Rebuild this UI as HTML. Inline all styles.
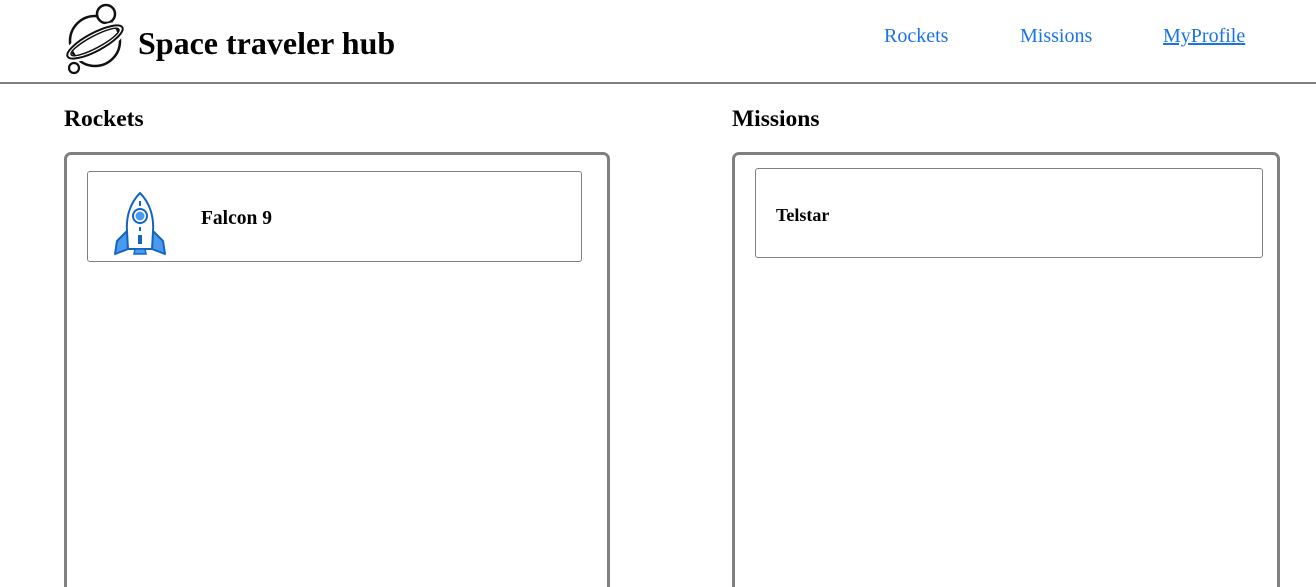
<!DOCTYPE html>
<html style="overflow:hidden"><head><style>
body{margin:0;background:#fff;font-family:"Liberation Serif",serif;width:1316px;height:587px;overflow:hidden;position:relative}
.a{position:absolute}
.nav{color:#1a73e8;font-size:20px;top:25px}
h2{position:absolute;margin:0;font-size:23.5px;font-weight:bold;top:106px}
.panel{position:absolute;top:152px;height:445px;border:3px solid #808080;border-radius:7px;box-sizing:border-box}
.card{position:absolute;border:1px solid #808080;border-radius:3px;box-sizing:border-box}
</style></head><body>
<svg class="a" style="left:62px;top:2px" width="64" height="74" viewBox="0 0 64 74">
<circle cx="33" cy="39" r="25" fill="none" stroke="#111" stroke-width="2.5"/>
<circle cx="44" cy="12" r="9" fill="#fff" stroke="#111" stroke-width="2.5"/>
<ellipse cx="33" cy="40" rx="31" ry="9" transform="rotate(-28 33 40)" fill="none" stroke="#fff" stroke-width="7"/>
<ellipse cx="33" cy="40" rx="31" ry="9" transform="rotate(-28 33 40)" fill="none" stroke="#111" stroke-width="2"/>
<ellipse cx="33" cy="40" rx="27" ry="6" transform="rotate(-28 33 40)" fill="none" stroke="#111" stroke-width="1.5"/>
<circle cx="12" cy="66" r="5" fill="#fff" stroke="#111" stroke-width="2.2"/>
</svg>
<div class="a" style="left:138px;top:25px;font-size:32px;font-weight:bold">Space traveler hub</div>
<div class="a nav" style="left:884px">Rockets</div>
<div class="a nav" style="left:1020px">Missions</div>
<div class="a nav" style="left:1163px;text-decoration:underline">MyProfile</div>
<div class="a" style="left:0;top:82px;width:1316px;height:2px;background:#808080"></div>
<h2 style="left:64px">Rockets</h2>
<h2 style="left:732px">Missions</h2>
<div class="panel" style="left:64px;width:546px"></div>
<div class="panel" style="left:732px;width:548px"></div>
<div class="card" style="left:87px;top:171px;width:495px;height:91px"></div>
<svg class="a" style="left:112px;top:191px" width="56" height="66" viewBox="0 0 56 66">
<path d="M15 40 L5 50 L3 63 L16 58 Z" fill="#4a9af0" stroke="#1565c0" stroke-width="2" stroke-linejoin="round"/>
<path d="M41 40 L51 50 L53 63 L40 58 Z" fill="#4a9af0" stroke="#1565c0" stroke-width="2" stroke-linejoin="round"/>
<path d="M28 2 C18 12 14 26 15 40 L16 58 L40 58 L41 40 C42 26 38 12 28 2 Z" fill="#fff" stroke="#1565c0" stroke-width="2" stroke-linejoin="round"/>
<path d="M23 58 L22 63 L34 63 L33 58 Z" fill="#4a9af0" stroke="#1565c0" stroke-width="1.5"/>
<circle cx="28" cy="25" r="7" fill="#fff" stroke="#1565c0" stroke-width="2"/>
<circle cx="28" cy="25" r="4.5" fill="#4a9af0"/>
<line x1="28" y1="10" x2="28" y2="15" stroke="#1565c0" stroke-width="2"/>
<rect x="26" y="44" width="4" height="9" fill="#1565c0"/>
<line x1="28" y1="36" x2="28" y2="40" stroke="#1565c0" stroke-width="2"/>
</svg>
<div class="a" style="left:201px;top:208px;font-size:19.5px;font-weight:bold">Falcon 9</div>
<div class="card" style="left:755px;top:168px;width:508px;height:90px"></div>
<div class="a" style="left:776px;top:205px;font-size:18px;font-weight:bold">Telstar</div>
</body></html>
